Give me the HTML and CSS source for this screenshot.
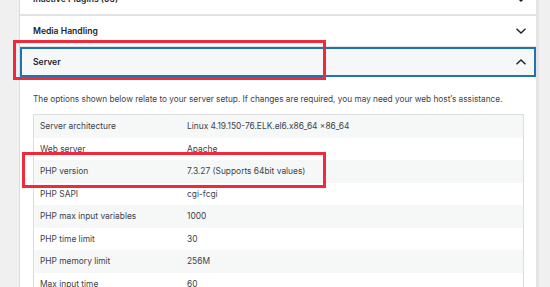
FILE: index.html
```html
<!DOCTYPE html>
<html lang="en">
<head>
<meta charset="utf-8">
<title>Site Health Info</title>
<link rel="stylesheet" href="styles.css">
</head>
<body>
<div class="page">
  <div class="gutter-left"></div>
  <div class="panel">
    <div class="section">
      <button class="trigger">
        <span class="title">Inactive Plugins (59)</span>
        <svg class="chev" width="12" height="8" viewBox="0 0 12 8"><path d="M1.5 1.8 L6 6 L10.5 1.8" fill="none" stroke="#1d2327" stroke-width="1.4"/></svg>
      </button>
    </div>
    <div class="section">
      <button class="trigger">
        <span class="title">Media Handling</span>
        <svg class="chev" width="12" height="8" viewBox="0 0 12 8"><path d="M1.5 1.8 L6 6 L10.5 1.8" fill="none" stroke="#1d2327" stroke-width="1.4"/></svg>
      </button>
    </div>
    <div class="section open">
      <button class="trigger focused">
        <span class="title">Server</span>
        <svg class="chev" width="12" height="8" viewBox="0 0 12 8"><path d="M1.5 6.2 L6 2 L10.5 6.2" fill="none" stroke="#1d2327" stroke-width="1.4"/></svg>
      </button>
      <span class="annot annot-server"></span>
      <div class="body">
        <p class="desc">The options shown below relate to your server setup. If changes are required, you may need your web host’s assistance.</p>
        <div class="table">
          <div class="row"><span class="label">Server architecture</span><span class="value">Linux 4.19.150-76.ELK.el6.x86_64 x86_64</span></div>
          <div class="row"><span class="label">Web server</span><span class="value">Apache</span></div>
          <div class="row"><span class="label">PHP version</span><span class="value">7.3.27 (Supports 64bit values)</span><span class="annot annot-php"></span></div>
          <div class="row"><span class="label">PHP SAPI</span><span class="value">cgi-fcgi</span></div>
          <div class="row"><span class="label">PHP max input variables</span><span class="value">1000</span></div>
          <div class="row"><span class="label">PHP time limit</span><span class="value">30</span></div>
          <div class="row"><span class="label">PHP memory limit</span><span class="value">256M</span></div>
          <div class="row"><span class="label">Max input time</span><span class="value">60</span></div>
        </div>
      </div>
    </div>
  </div>
  <div class="gutter-right"></div>
</div>
</body>
</html>
```

FILE: styles.css
```css
* { box-sizing: border-box; }
html, body { margin: 0; padding: 0; }
body {
  background: #f0f0f1;
  font-family: Inter, "Noto Sans", sans-serif;
  color: #3c434a;
  overflow: hidden;
  height: 287px;
}
.page {
  display: flex;
  height: 287px;
  overflow: hidden;
}
.gutter-left {
  width: 20px;
  flex: none;
  background: #f0f0f1;
  border-right: 1px solid #dcdcde;
}
.panel {
  width: 516px;
  flex: none;
  background: #fff;
  margin-top: -16px;
}
.gutter-right {
  flex: 1;
  background: #f0f0f1;
  border-left: 3px solid #e4e4e5;
}
.section {
  position: relative;
  border-bottom: 2px solid #e2e2e4;
}
.section.open { border-bottom: none; }
.trigger {
  display: flex;
  align-items: center;
  justify-content: space-between;
  width: 100%;
  height: 30px;
  padding: 0 9px 0 13px;
  border: none;
  background: #fff;
  font-family: inherit;
  font-size: 8.6px;
  font-weight: 600;
  color: #1d2327;
  text-align: left;
}
.trigger.focused {
  background: #f6f7f7;
  border: 2px solid #2271b1;
  padding: 0 7px 0 11px;
  margin-top: -1px;
}
.chev { display: block; }
.annot {
  position: absolute;
  border: 3px solid #ee2a3c;
  pointer-events: none;
}
.annot-server {
  left: -7px;
  top: -7px;
  width: 313px;
  height: 40px;
}
.body {
  padding: 16px 12px 0 13px;
}
.desc {
  margin: 0;
  font-size: 8.25px;
  line-height: 12px;
  white-space: nowrap;
}
.table {
  margin-top: 9px;
  border: 1px solid #dcdcde;
}
.row {
  position: relative;
  display: flex;
  align-items: center;
  height: 22.5px;
  font-size: 8.4px;
  padding-left: 6px;
}
.row:nth-child(odd) { background: #f6f7f7; }
.label { width: 147px; flex: none; }
.value { flex: 1; }
.annot-php {
  left: -12px;
  top: -8px;
  width: 304px;
  height: 36px;
}
```
